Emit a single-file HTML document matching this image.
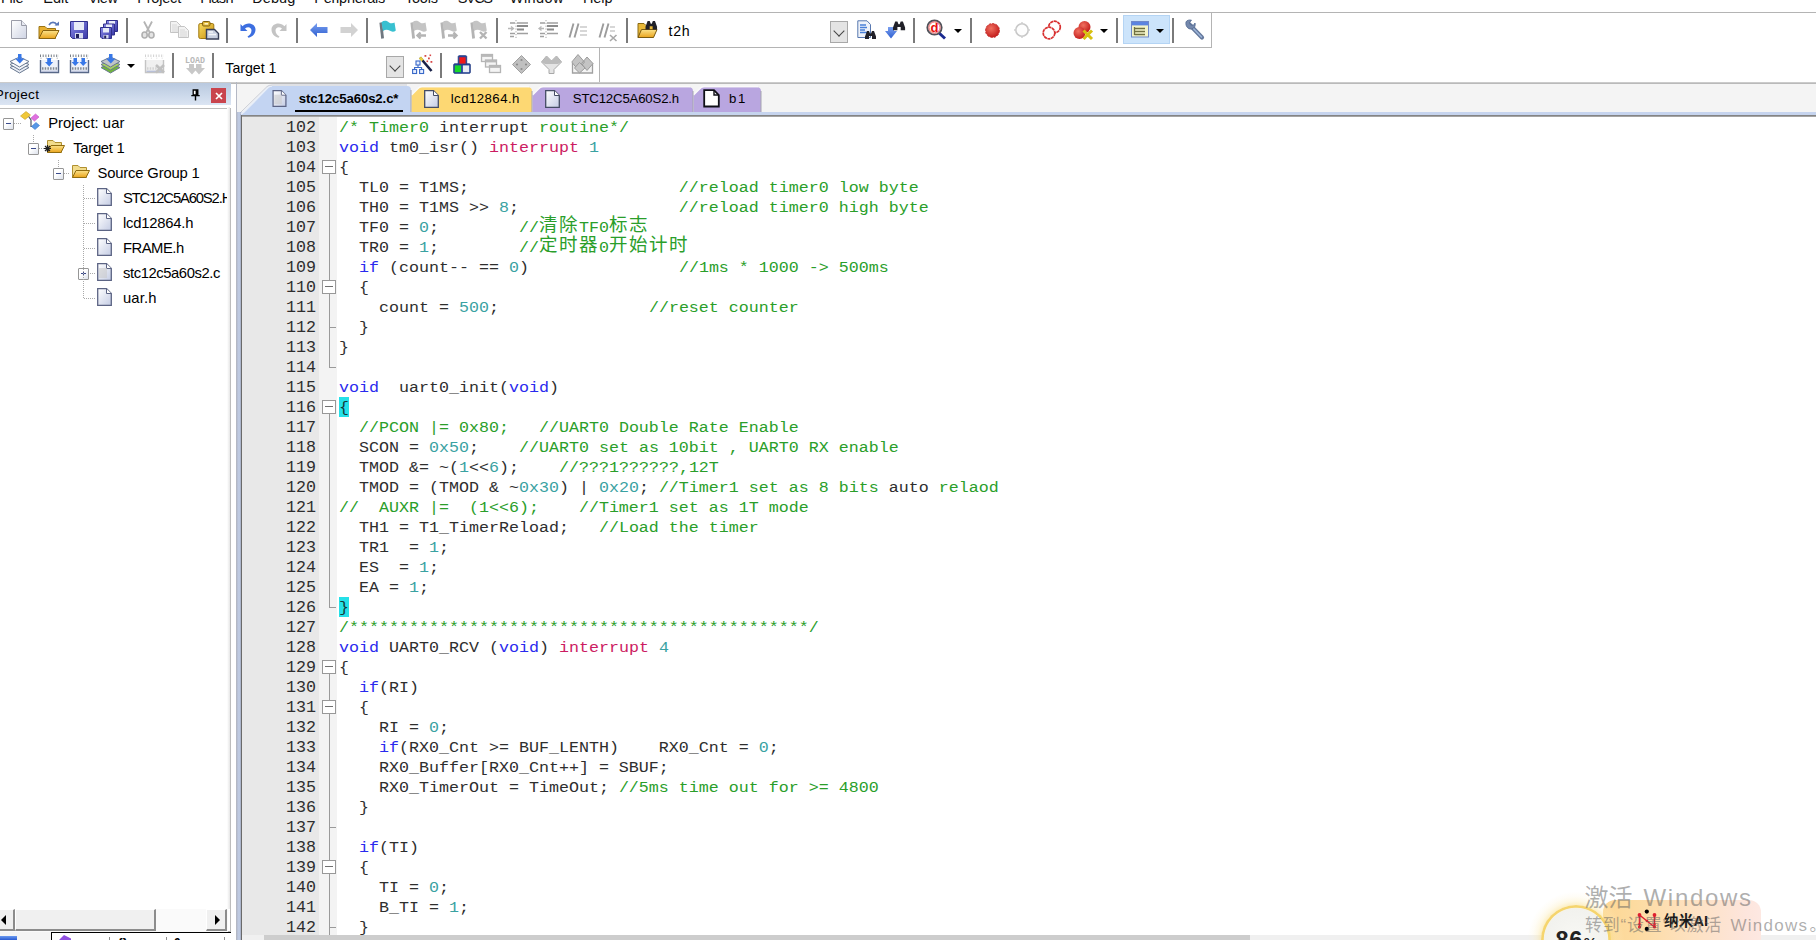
<!DOCTYPE html>
<html lang="zh"><head><meta charset="utf-8"><title>uar - uVision</title>
<style>
*{box-sizing:border-box;margin:0;padding:0}
html,body{width:1816px;height:940px;overflow:hidden;background:#fff}
body{position:relative;font-family:"Liberation Sans","Noto Sans CJK SC",sans-serif;font-size:15px;color:#000}
.abs{position:absolute}
/* menu */
#menu span{position:absolute;top:-11px;line-height:18px;font-size:15px;white-space:nowrap;color:#111}
/* toolbars */
.hline{position:absolute;height:1px;background:#a6a6a6}
.vline{position:absolute;width:1px;background:#a6a6a6}
.sep{position:absolute;width:1.5px;background:#7a7a7a}
.ic{position:absolute;overflow:visible}
.tbt{position:absolute;font-size:14.2px;line-height:18px;white-space:nowrap;color:#000}
.dd{position:absolute;width:0;height:0;border-left:4px solid transparent;border-right:4px solid transparent;border-top:4px solid #000}
.combo{position:absolute;width:18px;height:22px;border:1px solid #a8a8a8;background:#e4e4e4}
.combo:after{content:"";position:absolute;left:4px;top:5px;width:7px;height:7px;border-right:1.5px solid #444;border-bottom:1.5px solid #444;transform:rotate(45deg) scale(1,1)}
/* project panel */
#phead{left:0;top:83px;width:231px;height:22px;background:linear-gradient(#b9c9df,#dbe5f3)}
#ptree{left:-1px;top:108px;width:232px;height:824px;border:1px solid #bcbcbc;background:#fff}
.tr{position:absolute;font-size:15px;line-height:20px;white-space:nowrap;color:#000}
.ex{position:absolute;width:11px;height:12px;border:1px solid #969696;background:linear-gradient(135deg,#fff 40%,#dde2ec);border-radius:1px;margin-top:0.5px}
.ex:before{content:"";position:absolute;left:2px;top:4px;width:5px;height:1.5px;background:#3a4a8c}
.ex.plus:after{content:"";position:absolute;left:4px;top:2px;width:1.5px;height:5.5px;background:#3a4a8c}
.dot{position:absolute;background-image:linear-gradient(#aaa 50%,transparent 50%);background-size:1px 2px;width:1px}
.doth{position:absolute;background-image:linear-gradient(90deg,#aaa 50%,transparent 50%);background-size:2px 1px;height:1px}
/* editor */
#lnbg{left:242px;top:117px;width:77px;height:818px;background:#e8e8e8}
#fmbg{left:319px;top:117px;width:18px;height:818px;background:#f3f3f3}
.ln,.cl{position:absolute;font-family:"Liberation Mono","Noto Sans CJK SC",monospace;font-size:16.667px;line-height:20px;height:20px;white-space:pre;color:#2e2e2e}
.cl{transform:scaleY(0.87);transform-origin:0 14.4px}
.ln{transform:scaleY(0.95);transform-origin:0 14.4px}
.ln{left:256px;width:60px;text-align:right}
.hl{position:absolute;left:338.5px;width:10px;height:20px;background:#25e0e8}
.bb{color:#143838}
.cl{left:339px}
.k{color:#2a2aee}.n{color:#3aa2a2}.c{color:#2a9e2a}.i{color:#cc1c62}
.b{background:#25e0e8;display:inline-block;height:20px;color:#143838;margin-left:-0.5px}
.cj{transform:scaleY(1.15);transform-origin:0 15px;font-size:18.5px;letter-spacing:1.5px;line-height:20px;vertical-align:top;display:inline-block;height:20px;margin-top:-1px}
.fb{position:absolute;left:322px;width:14px;height:14px;border:1.4px solid #989898;background:#fff}
.fb:before{content:"";position:absolute;left:1.5px;top:4.8px;width:8px;height:1.2px;background:#707070}
.fv{position:absolute;left:328.6px;width:1.4px;background:#9a9a9a}
.ft{position:absolute;left:329px;width:7px;height:1.3px;background:#9a9a9a}
/* tabs */
.tab{position:absolute;top:86px;height:28px}
.tabt{position:absolute;font-size:14.2px;line-height:18px;white-space:nowrap;color:#000}
</style></head>
<body>
<!-- MENU -->
<div id="menu"><span style="left:1.0px;font-size:14.5px;letter-spacing:-0.244px">File</span><span style="left:43.2px;font-size:14.5px;letter-spacing:0.05px">Edit</span><span style="left:88.2px;font-size:14.5px;letter-spacing:-0.493px">View</span><span style="left:137.2px;font-size:14.5px;letter-spacing:-0.192px">Project</span><span style="left:200.2px;font-size:14.5px;letter-spacing:-0.534px">Flash</span><span style="left:252.2px;font-size:14.5px;letter-spacing:0.093px">Debug</span><span style="left:314.2px;font-size:14.5px;letter-spacing:-0.231px">Peripherals</span><span style="left:404.9px;font-size:14.5px;letter-spacing:-0.192px">Tools</span><span style="left:457.8px;font-size:14.5px;letter-spacing:-1.475px">SVCS</span><span style="left:509.8px;font-size:14.5px;letter-spacing:0.404px">Window</span><span style="left:582.9px;font-size:14.5px;letter-spacing:-0.082px">Help</span></div>
<!-- TOOLBARS -->
<svg width="0" height="0" style="position:absolute"><defs>
<linearGradient id="gPage" x1="0" y1="0" x2="1" y2="1"><stop offset="0" stop-color="#ffffff"/><stop offset="1" stop-color="#cfd4e4"/></linearGradient>
<linearGradient id="gFold" x1="0" y1="0" x2="0" y2="1"><stop offset="0" stop-color="#fbe28a"/><stop offset="1" stop-color="#eaa41c"/></linearGradient>
<linearGradient id="gFlop" x1="0" y1="0" x2="1" y2="1"><stop offset="0" stop-color="#8a8ae8"/><stop offset="1" stop-color="#3a3aa8"/></linearGradient>
<linearGradient id="gBlue" x1="0" y1="0" x2="0" y2="1"><stop offset="0" stop-color="#7aa0f0"/><stop offset="1" stop-color="#2f5fd0"/></linearGradient>
<linearGradient id="gGold" x1="0" y1="0" x2="1" y2="1"><stop offset="0" stop-color="#f8dc60"/><stop offset="1" stop-color="#c89010"/></linearGradient>
<radialGradient id="gRed" cx="0.4" cy="0.35" r="0.7"><stop offset="0" stop-color="#f07060"/><stop offset="1" stop-color="#c01818"/></radialGradient>
<linearGradient id="gGray" x1="0" y1="0" x2="0" y2="1"><stop offset="0" stop-color="#e0e0e0"/><stop offset="1" stop-color="#b4b4b4"/></linearGradient>
<linearGradient id="gTree" x1="0" y1="0" x2="1" y2="1"><stop offset="0" stop-color="#ffffff"/><stop offset="1" stop-color="#c4cce4"/></linearGradient>
</defs></svg><div class="hline" style="left:0;top:12px;width:1816px;background:#b4b4b4"></div><div class="hline" style="left:0;top:47px;width:1212px;background:#b4b4b4"></div><div class="vline" style="left:1211px;top:12px;height:36px;background:#b4b4b4"></div><div class="vline" style="left:599px;top:47px;height:36px;background:#b4b4b4"></div><div class="hline" style="left:0;top:82px;width:1816px;height:2px;background:linear-gradient(#d4d4d4,#b0b0b0)"></div><div class="sep" style="left:126px;top:18px;height:25px"></div><div class="sep" style="left:226px;top:18px;height:25px"></div><div class="sep" style="left:296px;top:18px;height:25px"></div><div class="sep" style="left:366px;top:18px;height:25px"></div><div class="sep" style="left:496px;top:18px;height:25px"></div><div class="sep" style="left:626px;top:18px;height:25px"></div><div class="sep" style="left:913px;top:18px;height:25px"></div><div class="sep" style="left:970px;top:18px;height:25px"></div><div class="sep" style="left:1116px;top:18px;height:25px"></div><div class="sep" style="left:1172px;top:18px;height:25px"></div><svg class="ic" style="left:11px;top:20px" width="16" height="19" viewBox="0 0 16 19" ><path d="M0.5 0.5H10.5L15.5 5.5V18.5H0.5Z" fill="url(#gPage)" stroke="#9a9ca8"/><path d="M10.5 0.5V5.5H15.5" fill="#e8eaf2" stroke="#9a9ca8"/></svg><svg class="ic" style="left:38px;top:20px" width="22" height="20" viewBox="0 0 22 20" ><path d="M1 6.5H7L9 8.5H17.5V18.5H1Z" fill="#e8b030" stroke="#9a7414"/>
<path d="M1 18.5L5 10.5H21L17 18.5Z" fill="url(#gFold)" stroke="#8a6410"/>
<path d="M11 5C13 1.5 17 1.5 19 5" fill="none" stroke="#5a78b8" stroke-width="1.6"/><path d="M16.5 5.5H21V1.5Z" fill="#5a78b8"/></svg><svg class="ic" style="left:70px;top:21px" width="18" height="18" viewBox="0 0 18 18" ><path d="M0.5 0.5H17.5V17.5H2.5L0.5 15.5Z" fill="url(#gFlop)" stroke="#30308a"/>
<rect x="4" y="1" width="10" height="8" fill="#e8ecf8"/><rect x="5" y="12" width="8" height="5.5" fill="#d8dcf0"/><rect x="6" y="13" width="3" height="4" fill="#20205a"/></svg><svg class="ic" style="left:100px;top:20px" width="18" height="19" viewBox="0 0 18 19" ><g transform="translate(6,0)"><path d="M0.5 0.5H11.5V11.5H2L0.5 10Z" fill="url(#gFlop)" stroke="#30308a"/><rect x="3" y="1" width="6" height="4.5" fill="#e8ecf8"/><rect x="3.5" y="8" width="5" height="3.5" fill="#d8dcf0"/><rect x="4.2" y="8.6" width="2" height="2.9" fill="#20205a"/></g><g transform="translate(3,3.5)"><path d="M0.5 0.5H11.5V11.5H2L0.5 10Z" fill="url(#gFlop)" stroke="#30308a"/><rect x="3" y="1" width="6" height="4.5" fill="#e8ecf8"/><rect x="3.5" y="8" width="5" height="3.5" fill="#d8dcf0"/><rect x="4.2" y="8.6" width="2" height="2.9" fill="#20205a"/></g><g transform="translate(0,7)"><path d="M0.5 0.5H11.5V11.5H2L0.5 10Z" fill="url(#gFlop)" stroke="#30308a"/><rect x="3" y="1" width="6" height="4.5" fill="#e8ecf8"/><rect x="3.5" y="8" width="5" height="3.5" fill="#d8dcf0"/><rect x="4.2" y="8.6" width="2" height="2.9" fill="#20205a"/></g></svg><svg class="ic" style="left:141px;top:21px" width="14" height="18" viewBox="0 0 14 18" ><path d="M3 0.5L8.5 11M11 0.5L5.5 11" stroke="#b4b4b4" stroke-width="1.8" fill="none"/>
<ellipse cx="3.6" cy="14" rx="2.6" ry="3" fill="#e4e4e4" stroke="#b0b0b0" stroke-width="1.6"/><ellipse cx="10.4" cy="14" rx="2.6" ry="3" fill="#e4e4e4" stroke="#b0b0b0" stroke-width="1.6"/></svg><svg class="ic" style="left:170px;top:21px" width="19" height="17" viewBox="0 0 19 17" ><g><path d="M0.5 0.5H6.5L10.5 4.5V11.5H0.5Z" fill="#f2f2f2" stroke="#c4c4c4"/><path d="M2 4H7M2 6H9M2 8H9M2 10H9" stroke="#d4d4d4" stroke-width="0.9"/></g><g transform="translate(8,5)"><path d="M0.5 0.5H6.5L10.5 4.5V11.5H0.5Z" fill="#f2f2f2" stroke="#c4c4c4"/><path d="M2 4H7M2 6H9M2 8H9M2 10H9" stroke="#d4d4d4" stroke-width="0.9"/></g></svg><svg class="ic" style="left:198px;top:21px" width="22" height="19" viewBox="0 0 22 19" ><rect x="0.8" y="2.5" width="15" height="15" rx="1.5" fill="url(#gGold)" stroke="#a07810"/>
<rect x="4.5" y="0.5" width="7.5" height="4.5" rx="1.2" fill="#e0b838" stroke="#806010"/><rect x="6.5" y="2" width="3.5" height="1.6" fill="#fff4c0"/>
<path d="M8.5 8.5H16.5L20.5 12.5V18H8.5Z" fill="#c8d0e0" stroke="#384058" stroke-width="1.4"/><path d="M10.5 11H15M10.5 13.5H18" stroke="#f4f6fa" stroke-width="1.4"/></svg><svg class="ic" style="left:240px;top:21px" width="17" height="17" viewBox="0 0 17 17" ><g><path d="M0.5 3V10H7.5L5 7.6C8 5 11.5 6.5 11.5 9.5C11.5 12.5 9.5 14.5 7.5 15.5L8.5 16.8C13 15.5 15.5 12.5 15.5 8.5C15.5 2.5 7 0.5 2.6 5.2Z" fill="#3c6ee0"/></g></svg><svg class="ic" style="left:270px;top:21px" width="17" height="17" viewBox="0 0 17 17" ><g transform="translate(17,0) scale(-1,1)"><path d="M0.5 3V10H7.5L5 7.6C8 5 11.5 6.5 11.5 9.5C11.5 12.5 9.5 14.5 7.5 15.5L8.5 16.8C13 15.5 15.5 12.5 15.5 8.5C15.5 2.5 7 0.5 2.6 5.2Z" fill="#c4c4c4"/></g></svg><svg class="ic" style="left:309.5px;top:21.5px" width="18" height="16" viewBox="0 0 18 16" ><g><path d="M0 8L7 1V5H17.5V11H7V15Z" fill="url(#gBlue)"/></g></svg><svg class="ic" style="left:339.5px;top:21.5px" width="18" height="16" viewBox="0 0 18 16" ><g transform="translate(18,0) scale(-1,1)"><path d="M0 8L7 1V5H17.5V11H7V15Z" fill="#d2d2d2"/></g></svg><svg class="ic" style="left:378px;top:20px" width="20" height="19" viewBox="0 0 20 19" ><path d="M2.8 2.5L4.6 18.5" stroke="#707880" stroke-width="2.8"/><path d="M3.5 2.2C6 0.2 9 0.6 11 2.4C13 3.8 15 3.4 16.5 2.6L17.8 10.5C16 12.2 13.5 12 11.5 10.6C9.5 9.2 7 9.6 5 11Z" fill="#38c0d0"/></svg><svg class="ic" style="left:409px;top:20px" width="20" height="19" viewBox="0 0 20 19" ><path d="M2.8 2.5L4.6 18.5" stroke="#b4b4b4" stroke-width="2.8"/><path d="M3.5 2.2C6 0.2 9 0.6 11 2.4C13 3.8 15 3.4 16.5 2.6L17.8 10.5C16 12.2 13.5 12 11.5 10.6C9.5 9.2 7 9.6 5 11Z" fill="#c4c4c4"/><path d="M9 15.5H17M11.5 12.5L8.5 15.5L11.5 18.5" stroke="#b4b4b4" stroke-width="2.4" fill="none"/></svg><svg class="ic" style="left:439px;top:20px" width="20" height="19" viewBox="0 0 20 19" ><path d="M2.8 2.5L4.6 18.5" stroke="#b4b4b4" stroke-width="2.8"/><path d="M3.5 2.2C6 0.2 9 0.6 11 2.4C13 3.8 15 3.4 16.5 2.6L17.8 10.5C16 12.2 13.5 12 11.5 10.6C9.5 9.2 7 9.6 5 11Z" fill="#c4c4c4"/><path d="M9 15.5H17M14.5 12.5L17.5 15.5L14.5 18.5" stroke="#b4b4b4" stroke-width="2.4" fill="none"/></svg><svg class="ic" style="left:469px;top:20px" width="20" height="19" viewBox="0 0 20 19" ><path d="M2.8 2.5L4.6 18.5" stroke="#b4b4b4" stroke-width="2.8"/><path d="M3.5 2.2C6 0.2 9 0.6 11 2.4C13 3.8 15 3.4 16.5 2.6L17.8 10.5C16 12.2 13.5 12 11.5 10.6C9.5 9.2 7 9.6 5 11Z" fill="#c4c4c4"/><path d="M11 12L17.5 18.5M17.5 12L11 18.5" stroke="#b4b4b4" stroke-width="2.4"/></svg><svg class="ic" style="left:508px;top:20px" width="21" height="19" viewBox="0 0 21 19" ><path d="M0 8.5H5M3 6.5L5.5 8.5L3 10.5" stroke="#b8b8b8" stroke-width="1.3" fill="none"/><path d="M2 3H20M2 13.5H20M2 16.5H6" stroke="#a0a0a0" stroke-width="1.5" stroke-dasharray="5 2 20"/><path d="M9 6H20M9 9.5H16" stroke="#8c8c8c" stroke-width="2"/><path d="M8 0V19" stroke="#a8a8a8" stroke-width="1" stroke-dasharray="1.2 1.6"/></svg><svg class="ic" style="left:538px;top:20px" width="21" height="19" viewBox="0 0 21 19" ><path d="M1 8.5H6M3.5 6.5L1 8.5L3.5 10.5" stroke="#b8b8b8" stroke-width="1.3" fill="none"/><path d="M2 3H20M2 13.5H20M2 16.5H6" stroke="#a0a0a0" stroke-width="1.5" stroke-dasharray="5 2 20"/><path d="M9 6H20M9 9.5H16" stroke="#8c8c8c" stroke-width="2"/><path d="M8 0V19" stroke="#a8a8a8" stroke-width="1" stroke-dasharray="1.2 1.6"/></svg><svg class="ic" style="left:569px;top:23px" width="19" height="19" viewBox="0 0 19 19" ><path d="M4.5 0.5L0.5 14.5M9.5 0.5L5.5 14.5" stroke="#9c9c9c" stroke-width="1.9"/><path d="M11 4H18M11 8H18M11 12H18" stroke="#b0b0b0" stroke-width="1.2"/></svg><svg class="ic" style="left:599px;top:23px" width="19" height="19" viewBox="0 0 19 19" ><path d="M4.5 0.5L0.5 14.5M9.5 0.5L5.5 14.5" stroke="#9c9c9c" stroke-width="1.9"/><path d="M11 4H16M11 8H16" stroke="#b0b0b0" stroke-width="1.2"/><path d="M11 12L17.5 18M17.5 12L11 18" stroke="#a8a8a8" stroke-width="1.6"/></svg><svg class="ic" style="left:637px;top:20px" width="22" height="19" viewBox="0 0 22 19" ><path d="M1 3.5H7L9 5.5H16V17.5H1Z" fill="#e8b838" stroke="#8a6a14"/><path d="M1 17.5L4.5 9.5H20L16.5 17.5Z" fill="url(#gFold)" stroke="#7a5a10"/><g transform="translate(8.5,0.5) scale(1.05)"><path d="M0 6L2 0.5H4L5 3H6L7 0.5H9L11 6V8.5H7V5.5H4V8.5H0Z" fill="#202028"/></g></svg><div class="tbt" style="left:668.5px;top:22px;letter-spacing:0.755px">t2h</div><div class="combo" style="left:830px;top:21px"></div><svg class="ic" style="left:857px;top:20px" width="20" height="20" viewBox="0 0 20 20" ><path d="M0.8 0.8H10L13.5 4.5V17.5H0.8Z" fill="#eef2fa" stroke="#5878b0"/><path d="M3 5H9M3 7.5H10M3 10H8M3 12.5H10" stroke="#4a80d8" stroke-width="1.3"/><g transform="translate(8,10.5) scale(1.0)"><path d="M0 6L2 0.5H4L5 3H6L7 0.5H9L11 6V8.5H7V5.5H4V8.5H0Z" fill="#202028"/></g></svg><svg class="ic" style="left:885px;top:20px" width="21" height="20" viewBox="0 0 21 20" ><path d="M3 7H9V11H12L6 18.5L0 11H3Z" fill="url(#gBlue)"/><g transform="translate(8,1) scale(1.1)"><path d="M0 6L2 0.5H4L5 3H6L7 0.5H9L11 6V8.5H7V5.5H4V8.5H0Z" fill="#202028"/></g></svg><svg class="ic" style="left:926px;top:19px" width="21" height="21" viewBox="0 0 21 21" ><path d="M12 13L19 19.5" stroke="#1a2a90" stroke-width="3"/><circle cx="8.5" cy="8.5" r="7.2" fill="#fff" stroke="#505058" stroke-width="1.8"/><circle cx="8.5" cy="8.5" r="5.6" fill="#fff" stroke="#e83030" stroke-width="0.8"/><text x="4.4" y="13" font-family="Liberation Sans,sans-serif" font-weight="bold" font-size="13" fill="#e81010">d</text></svg><div class="dd" style="left:954px;top:29px"></div><svg class="ic" style="left:984px;top:22px" width="17" height="17" viewBox="0 0 17 17" ><circle cx="8.5" cy="8.5" r="7" fill="url(#gRed)" stroke="#c83030" stroke-width="1" stroke-dasharray="2.2 1.4"/></svg><svg class="ic" style="left:1014px;top:22px" width="16" height="16" viewBox="0 0 16 16" ><circle cx="8" cy="8" r="6.2" fill="#fdfdfd" stroke="#c8c8c8" stroke-width="1.6"/><path d="M8 0V2M8 14V16M0 8H2M14 8H16" stroke="#d0d0d0" stroke-width="1.5"/></svg><svg class="ic" style="left:1042px;top:20px" width="20" height="20" viewBox="0 0 20 20" ><circle cx="12.5" cy="7" r="5.8" fill="#fff" stroke="#d83030" stroke-width="1.7" stroke-dasharray="3.2 0.5"/><circle cx="7" cy="13" r="5.8" fill="#fff" stroke="#d83030" stroke-width="1.7" stroke-dasharray="3.2 0.5"/></svg><svg class="ic" style="left:1073px;top:20px" width="22" height="20" viewBox="0 0 22 20" ><circle cx="11.5" cy="7" r="6" fill="url(#gRed)"/><circle cx="6.5" cy="13" r="6" fill="url(#gRed)"/><path d="M10.5 10.5L19 19M19 10.5L10.5 19" stroke="#d8c010" stroke-width="3"/></svg><div class="dd" style="left:1100px;top:29px"></div><div class="abs" style="left:1123px;top:15px;width:47px;height:29px;background:#cce4fb;border:1px solid #b4d4f4"></div><svg class="ic" style="left:1131px;top:21px" width="18" height="17" viewBox="0 0 18 17" ><rect x="0.5" y="0.5" width="17" height="15.5" fill="#f4f4c8" stroke="#7088c8"/><rect x="1" y="1" width="16" height="3.4" fill="#5c84e0"/><path d="M3.5 6V14M3.5 7.5H14M3.5 10.5H14M3.5 13.5H14" stroke="#707040" stroke-width="1.3" fill="none"/></svg><div class="dd" style="left:1156px;top:29px"></div><svg class="ic" style="left:1184px;top:19px" width="22" height="21" viewBox="0 0 22 21" ><path d="M5 5L18 18.5" stroke="#64789c" stroke-width="4.2" stroke-linecap="round"/><path d="M5.5 5.5L17.5 18" stroke="#9cb4d8" stroke-width="1.6" stroke-linecap="round"/><path d="M2 3C2.5 1.5 5 0.5 7.5 1.2L5.5 3.6L6.5 6L9.5 6.2L11 4C11.8 6.5 10.5 9.5 7.5 10C4 10.5 1.2 7 2 3Z" fill="#7488ac" stroke="#506890" stroke-width="0.8"/></svg><div class="sep" style="left:172px;top:53px;height:25px"></div><div class="sep" style="left:212px;top:53px;height:25px"></div><div class="sep" style="left:440px;top:53px;height:25px"></div><svg class="ic" style="left:9px;top:54px" width="21" height="20" viewBox="0 0 21 20" ><path d="M1 13.5L10.5 9L20 13.5L10.5 19Z" fill="#e8ecf4" stroke="#687890" stroke-width="1"/>
<path d="M1 10.5L10.5 6L20 10.5L10.5 16Z" fill="#f4f6fa" stroke="#687890" stroke-width="1"/>
<path d="M1 7.5L10.5 3L20 7.5L10.5 13Z" fill="#fcfcfe" stroke="#687890" stroke-width="1"/>
<path d="M9 0H12.5V4.5H15.5L10.8 9.5L6 4.5H9Z" fill="#3878e8"/></svg><svg class="ic" style="left:39px;top:54px" width="21" height="20" viewBox="0 0 21 20" ><path d="M1 1.8H20" stroke="#586068" stroke-width="2.6" stroke-dasharray="1 1.7" opacity="0.8"/><path d="M1.5 4.2H20" stroke="#586068" stroke-width="1" stroke-dasharray="1 4.4" opacity="0.6"/><path d="M1.5 6V18.5H19.5V6" fill="#eef2fa" stroke="#586888" stroke-width="1.4"/><path d="M3 14.5H18" stroke="#586068" stroke-width="2.4" stroke-dasharray="1.5 1.2" opacity="0.7"/><path d="M2.5 17.3H18.5" stroke="#b8c0d8" stroke-width="1.4"/><path d="M8.2 4H12V8H14.2L10.2 12.5L6 8H8.2Z" fill="#3878e8"/></svg><svg class="ic" style="left:69px;top:54px" width="21" height="20" viewBox="0 0 21 20" ><path d="M1 1.8H20" stroke="#586068" stroke-width="2.6" stroke-dasharray="1 1.7" opacity="0.8"/><path d="M1.5 4.2H20" stroke="#586068" stroke-width="1" stroke-dasharray="1 4.4" opacity="0.6"/><path d="M1.5 6V18.5H19.5V6" fill="#eef2fa" stroke="#586888" stroke-width="1.4"/><path d="M3 14.5H18" stroke="#586068" stroke-width="2.4" stroke-dasharray="1.5 1.2" opacity="0.7"/><path d="M2.5 17.3H18.5" stroke="#b8c0d8" stroke-width="1.4"/><path d="M4.5 4H8V8H10L6.2 12L2.5 8H4.5Z M12.5 4H16V8H18L14.2 12L10.5 8H12.5Z" fill="#3878e8"/></svg><svg class="ic" style="left:100px;top:54px" width="21" height="20" viewBox="0 0 21 20" ><path d="M1 13.5L10.5 9L20 13.5L10.5 19Z" fill="#70b838" stroke="#687890" stroke-width="1"/>
<path d="M1 10.5L10.5 6L20 10.5L10.5 16Z" fill="#a8d060" stroke="#687890" stroke-width="1"/>
<path d="M1 7.5L10.5 3L20 7.5L10.5 13Z" fill="#c0c4c8" stroke="#687890" stroke-width="1"/>
<path d="M9 0H12.5V4.5H15.5L10.8 9.5L6 4.5H9Z" fill="#3878e8"/></svg><div class="dd" style="left:127px;top:64px"></div><svg class="ic" style="left:144px;top:54px" width="21" height="20" viewBox="0 0 21 20" ><path d="M1 1.8H20" stroke="#c8c8c8" stroke-width="2.6" stroke-dasharray="1 1.7" opacity="0.8"/><path d="M1.5 4.2H20" stroke="#c8c8c8" stroke-width="1" stroke-dasharray="1 4.4" opacity="0.6"/><path d="M1.5 6V18.5H19.5V6" fill="#f0f0f0" stroke="#c4c4c4" stroke-width="1.4"/><path d="M3 14.5H18" stroke="#c8c8c8" stroke-width="2.4" stroke-dasharray="1.5 1.2" opacity="0.7"/><path d="M2.5 17.3H18.5" stroke="#b8c0d8" stroke-width="1.4"/><path d="M12 11L20 18.5M20 11L12 18.5" stroke="#c0c0c0" stroke-width="2.6"/></svg><svg class="ic" style="left:185px;top:54px" width="21" height="21" viewBox="0 0 21 21" ><text x="0" y="8.5" font-family="Liberation Mono,monospace" font-weight="bold" font-size="9.5" fill="#b8b8b8" textLength="20" lengthAdjust="spacingAndGlyphs">LOAD</text><path d="M4 10H9V14H11V10H16.5V14H20L14 20.5L10.5 16.5L7 20.5L1 14H4Z" fill="#c8c8c8"/></svg><div class="tbt" style="left:225.3px;top:58.5px;letter-spacing:-0.008px">Target 1</div><div class="combo" style="left:386px;top:56px"></div><svg class="ic" style="left:412px;top:54px" width="22" height="21" viewBox="0 0 22 21" ><path d="M8 3.5L19.5 17" stroke="#182048" stroke-width="2.6"/><path d="M8 3.5L10.5 6.5" stroke="#e8d040" stroke-width="2.8"/>
<g fill="#d84848"><rect x="12.5" y="1" width="1.8" height="1.8"/><rect x="16" y="3.5" width="1.8" height="1.8"/><rect x="18.5" y="7" width="1.8" height="1.8"/><rect x="14.5" y="6.5" width="1.6" height="1.6"/><rect x="17.5" y="0.5" width="1.6" height="1.6"/></g>
<g fill="#e8f0ff" stroke="#3868c8" stroke-width="1.1"><rect x="4" y="7" width="4" height="4"/><rect x="0.6" y="15.5" width="4" height="4"/><rect x="7.6" y="15.5" width="4" height="4"/></g><path d="M6 11V13.5M2.6 15.5V13.5H9.6V15.5" stroke="#3868c8" stroke-width="1.1" fill="none"/></svg><svg class="ic" style="left:453px;top:55px" width="18" height="19" viewBox="0 0 18 19" ><g transform="scale(0.9,0.905)"><rect x="0.8" y="9.8" width="18.4" height="10.4" rx="1" fill="#2848a0" stroke="#203880"/><rect x="5.8" y="0.8" width="9.4" height="10" rx="1" fill="#2848a0" stroke="#203880"/>
<rect x="7" y="2.5" width="7" height="7" fill="#f01818"/><rect x="2" y="11.5" width="7" height="7.5" fill="#18d828"/><rect x="11" y="11.5" width="7" height="7.5" fill="#e8ecf4"/></g></svg><svg class="ic" style="left:481px;top:54px" width="21" height="20" viewBox="0 0 21 20" ><g><rect x="0.5" y="0.5" width="11" height="7" fill="#f4f4f4" stroke="#b4b4b4" stroke-width="1.3"/><rect x="0.5" y="0.5" width="11" height="2.4" fill="#b8b8b8"/></g><g transform="translate(4,5.5)"><rect x="0.5" y="0.5" width="11" height="7" fill="#f4f4f4" stroke="#b4b4b4" stroke-width="1.3"/><rect x="0.5" y="0.5" width="11" height="2.4" fill="#b8b8b8"/></g><g transform="translate(8,11)"><rect x="0.5" y="0.5" width="11" height="7" fill="#f4f4f4" stroke="#b4b4b4" stroke-width="1.3"/><rect x="0.5" y="0.5" width="11" height="2.4" fill="#b8b8b8"/></g></svg><svg class="ic" style="left:512px;top:55px" width="19" height="19" viewBox="0 0 19 19" ><path d="M9.5 0.5L18.5 9.5L9.5 18.5L0.5 9.5Z" fill="#c0c0c0" stroke="#a0a0a0"/><g fill="#8c8c8c"><circle cx="9.5" cy="5" r="1.1"/><circle cx="5" cy="9.5" r="1.1"/><circle cx="14" cy="9.5" r="1.1"/><circle cx="9.5" cy="14" r="1.1"/></g></svg><svg class="ic" style="left:541px;top:55px" width="21" height="19" viewBox="0 0 21 19" ><path d="M0.5 7L5.5 1L10.5 6L15.5 1L20.5 7L13 14.5V18.5H8V14.5Z" fill="#e4e4e4" stroke="#a8a8a8"/><path d="M0.5 7L5.5 1L10.5 6L15.5 1L20.5 7L17 9H4Z" fill="#bcbcbc"/></svg><svg class="ic" style="left:571px;top:54px" width="23" height="20" viewBox="0 0 23 20" ><path d="M1.5 9V19H21.5V9" fill="#f4f4f4" stroke="#a0a0a0" stroke-width="1.3"/><path d="M7 0.5L13.5 8L7 16L0.8 8Z M16 3L22 9.5L16 16.5L10.5 9.5Z" fill="#c4c4c4" stroke="#9c9c9c"/><path d="M8.5 8.5L14 14L8.5 19L3.5 14Z" fill="#c8c8c8" stroke="#9c9c9c"/><path d="M1.5 14L5.5 19M21.5 14L17 19" stroke="#fff" stroke-width="0"/></svg>
<!-- PROJECT PANEL -->
<div class="abs" id="phead"></div><div class="abs" style="left:-5.2px;top:86.3px;font-size:13.6px;line-height:18px;letter-spacing:0.298px">Project</div><svg class="ic" style="left:191px;top:89px" width="9" height="12" viewBox="0 0 9 12" ><path d="M2.2 1H6.8V6H2.2Z" fill="#fff" stroke="#000" stroke-width="1.3"/><rect x="4.6" y="1" width="2.4" height="5" fill="#000"/><path d="M0.3 6.6H8.7M4.5 6.6V11.5" stroke="#000" stroke-width="1.4" fill="none"/></svg><div class="abs" style="left:211px;top:88px;width:15px;height:15px;background:#c9444d"></div><svg class="ic" style="left:214.5px;top:91.5px" width="8" height="8" viewBox="0 0 8 8" ><path d="M1 1L7 7M7 1L1 7" stroke="#fff" stroke-width="1.7"/></svg><div class="abs" id="ptree"></div><div class="abs" style="left:227px;top:107px;width:3px;height:802px;background:linear-gradient(90deg,#fff,#e6e6e6)"></div><div class="tr" style="left:48.2px;top:113px;font-size:14.8px;letter-spacing:0.044px">Project: uar</div><div class="tr" style="left:73.2px;top:138px;font-size:14.8px;letter-spacing:-0.284px">Target 1</div><div class="tr" style="left:97.5px;top:163px;font-size:14.8px;letter-spacing:-0.162px">Source Group 1</div><div class="tr" style="left:123.0px;top:188px;font-size:14.8px;letter-spacing:-1.143px;width:104px;overflow:hidden">STC12C5A60S2.H</div><div class="tr" style="left:123.0px;top:213px;font-size:14.8px;letter-spacing:-0.221px">lcd12864.h</div><div class="tr" style="left:123.0px;top:238px;font-size:14.8px;letter-spacing:-0.492px">FRAME.h</div><div class="tr" style="left:123.0px;top:263px;font-size:14.8px;letter-spacing:-0.423px">stc12c5a60s2.c</div><div class="tr" style="left:123.0px;top:288px;font-size:14.8px;letter-spacing:0.136px">uar.h</div><div class="ex" style="left:2.5px;top:117px"></div><div class="ex" style="left:27.5px;top:142px"></div><div class="ex" style="left:52.5px;top:167px"></div><div class="ex plus" style="left:77.5px;top:267px"></div><div class="doth" style="left:14px;top:123px;width:8px"></div><div class="dot" style="left:33px;top:135px;height:8px"></div><div class="doth" style="left:39px;top:148px;width:6px"></div><div class="dot" style="left:58px;top:160px;height:8px"></div><div class="doth" style="left:64px;top:173px;width:6px"></div><div class="dot" style="left:83px;top:185px;height:113px"></div><div class="doth" style="left:84px;top:198px;width:12px"></div><div class="doth" style="left:84px;top:223px;width:12px"></div><div class="doth" style="left:84px;top:248px;width:12px"></div><div class="doth" style="left:84px;top:298px;width:12px"></div><div class="doth" style="left:90px;top:273px;width:6px"></div><svg class="ic" style="left:20px;top:111px" width="20" height="20" viewBox="0 0 20 20" ><path d="M8 4.5L11 9V15.5H13" stroke="#505868" stroke-width="1.2" fill="none"/><path d="M0.5 5L6 0.5L10.5 4L5 8.5Z" fill="#f0c838" stroke="#c8a020" stroke-width="0.6"/><path d="M11 7L15.5 3L19 6L14.5 10Z" fill="#e070e0" stroke="#c050c0" stroke-width="0.6"/><path d="M11.5 15.5L16 11.5L19.5 14.5L15 18.5Z" fill="#5898e8" stroke="#3878c8" stroke-width="0.6"/></svg><svg class="ic" style="left:44px;top:138px" width="21" height="17" viewBox="0 0 21 17" ><path d="M3.5 2.5H9L11 4.5H17.5V14.5H3.5Z" fill="#f2dc8c" stroke="#b09030"/><path d="M3.5 14.5L7 7.5H20.5L17 14.5Z" fill="url(#gFold)" stroke="#906c10"/><path d="M0 10.5H7M3.5 7V14M1 8L6 13M6 8L1 13" stroke="#202020" stroke-width="1.2"/></svg><svg class="ic" style="left:69px;top:163px" width="21" height="17" viewBox="0 0 21 17" ><path d="M3.5 2.5H9L11 4.5H17.5V14.5H3.5Z" fill="#f2dc8c" stroke="#b09030"/><path d="M3.5 14.5L7 7.5H20.5L17 14.5Z" fill="url(#gFold)" stroke="#906c10"/></svg><svg class="ic" style="left:97px;top:188px" width="15" height="18" viewBox="0 0 15 18" ><path d="M0.7 0.7H9.5L14.3 5.5V17.3H0.7Z" fill="url(#gTree)" stroke="#5c6484" stroke-width="1.3"/><path d="M9.5 0.7V5.5H14.3" fill="#fff" stroke="#5c6484" stroke-width="1"/></svg><svg class="ic" style="left:97px;top:213px" width="15" height="18" viewBox="0 0 15 18" ><path d="M0.7 0.7H9.5L14.3 5.5V17.3H0.7Z" fill="url(#gTree)" stroke="#5c6484" stroke-width="1.3"/><path d="M9.5 0.7V5.5H14.3" fill="#fff" stroke="#5c6484" stroke-width="1"/></svg><svg class="ic" style="left:97px;top:238px" width="15" height="18" viewBox="0 0 15 18" ><path d="M0.7 0.7H9.5L14.3 5.5V17.3H0.7Z" fill="url(#gTree)" stroke="#5c6484" stroke-width="1.3"/><path d="M9.5 0.7V5.5H14.3" fill="#fff" stroke="#5c6484" stroke-width="1"/></svg><svg class="ic" style="left:97px;top:263px" width="15" height="18" viewBox="0 0 15 18" ><path d="M0.7 0.7H9.5L14.3 5.5V17.3H0.7Z" fill="url(#gTree)" stroke="#5c6484" stroke-width="1.3"/><path d="M9.5 0.7V5.5H14.3" fill="#fff" stroke="#5c6484" stroke-width="1"/><rect x="2" y="5" width="8" height="10" fill="#c8c8c8" opacity="0.55"/></svg><svg class="ic" style="left:97px;top:288px" width="15" height="18" viewBox="0 0 15 18" ><path d="M0.7 0.7H9.5L14.3 5.5V17.3H0.7Z" fill="url(#gTree)" stroke="#5c6484" stroke-width="1.3"/><path d="M9.5 0.7V5.5H14.3" fill="#fff" stroke="#5c6484" stroke-width="1"/></svg><div class="abs" style="left:0;top:909px;width:228px;height:23px;background:#fafafa"></div><div class="abs" style="left:-3px;top:909px;width:18px;height:22px;background:#f0f0f0;border-top:1px solid #fff;border-left:1px solid #fff;border-right:2px solid #8c8c8c;border-bottom:2px solid #8c8c8c"></div><div class="abs" style="left:15px;top:909px;width:141px;height:22px;background:#f0f0f0;border-top:1px solid #fff;border-left:1px solid #fff;border-right:2px solid #8c8c8c;border-bottom:2px solid #8c8c8c"></div><div class="abs" style="left:206px;top:909px;width:21px;height:22px;background:#f0f0f0;border-top:1px solid #fff;border-left:1px solid #fff;border-right:2px solid #8c8c8c;border-bottom:2px solid #8c8c8c"></div><div class="abs" style="left:1px;top:915px;width:0;height:0;border-top:5px solid transparent;border-bottom:5px solid transparent;border-right:5px solid #000"></div><div class="abs" style="left:215px;top:915px;width:0;height:0;border-top:5px solid transparent;border-bottom:5px solid transparent;border-left:5px solid #000"></div><div class="abs" style="left:0;top:932px;width:231px;height:8px;background:#f4f4f4"></div><div class="abs" style="left:51px;top:932px;width:180px;height:8px;background:#fff;border-top:1px solid #000;border-left:1px solid #000"></div><div class="abs" style="left:0;top:936px;width:17px;height:4px;background:linear-gradient(#6a9af0,#2a5ad0)"></div><svg class="ic" style="left:58px;top:934px" width="14" height="7" viewBox="0 0 14 7" ><path d="M0 7L6 1L13 4.5V7Z" fill="#9050e0"/></svg><div class="abs" style="left:109px;top:937px;width:1px;height:3px;background:#909090"></div><div class="abs" style="left:166px;top:937px;width:1px;height:3px;background:#909090"></div><div class="abs" style="left:224px;top:937px;width:1px;height:3px;background:#909090"></div><div class="abs" style="left:118px;top:937px;font-size:12px;line-height:12px;font-weight:bold">{}</div><div class="abs" style="left:174px;top:937px;font-size:12px;line-height:12px;font-weight:bold">0</div>
<!-- SPLITTER + EDITOR -->
<div class="abs" style="left:231px;top:84px;width:5px;height:856px;background:#fff"></div><div class="abs" style="left:236px;top:82px;width:1px;height:858px;background:#b4b8c4"></div><div class="abs" style="left:237px;top:84px;width:1579px;height:28px;background:#f4f4f4"></div><div class="abs" style="left:237px;top:112px;width:1579px;height:3px;background:#c6d4ee"></div><div class="abs" style="left:237px;top:112px;width:4px;height:828px;background:linear-gradient(90deg,#b4bcd0,#c0cce4 45%,#bcc8e0 70%,#a0a8bc)"></div><div class="abs" style="left:241px;top:115px;width:1575px;height:2px;background:linear-gradient(#747474,#b4b4b4)"></div><div class="abs" style="left:241px;top:115px;width:1px;height:825px;background:#6a6a6a"></div><svg class="ic" style="left:241px;top:84px" width="580" height="31" viewBox="0 0 580 31" ><path d="M0 31L3 28L27 3.5Q28.5 2 31 2H166Q170 2 170 6V31Z" fill="#c3d4f2"/>
<path d="M0 30L3 28L27 3.5Q28.5 2 31 2" fill="none" stroke="#e8eef8" stroke-width="1.6"/><path d="M-0.5 28.5L26 2.6Q28 1 31 1H166" fill="none" stroke="#b8bcc8" stroke-width="0.7"/>
<path d="M170.5 28V11L177 4.5Q178.5 3.2 181 3.2H287Q291 3.2 291 7V28Z" fill="#fdd873"/>
<path d="M291.5 28V11L298 4.5Q299.5 3.2 302 3.2H448Q452 3.2 452 7V28Z" fill="#b9a6e0"/>
<path d="M452.5 28V11L459 4.5Q460.5 3.2 463 3.2H516Q520 3.2 520 7V28Z" fill="#b9a6e0"/>
<path d="M170.5 11L177 4.5Q178.5 2.6 181 2.6H288M291.5 11L298 4.5Q299.5 2.6 302 2.6H449M452.5 11L459 4.5Q460.5 2.6 463 2.6H517" stroke="#fafafa" stroke-width="1.5" fill="none"/>
<path d="M170 6V28M291 7V28M452 7V28M520 7V28" stroke="#a4a4b0" stroke-width="1"/>
</svg><svg class="ic" style="left:272px;top:90px" width="15" height="17" viewBox="0 0 15 18" ><path d="M0.7 0.7H9.5L14.3 5.5V17.3H0.7Z" fill="url(#gTree)" stroke="#5c6484" stroke-width="1.3"/><path d="M9.5 0.7V5.5H14.3" fill="#fff" stroke="#5c6484" stroke-width="1"/><rect x="2" y="5" width="8" height="10" fill="#c8c8c8" opacity="0.55"/></svg><svg class="ic" style="left:424px;top:90px" width="15" height="18" viewBox="0 0 15 18" ><path d="M0.7 0.7H9.5L14.3 5.5V17.3H0.7Z" fill="url(#gTree)" stroke="#444c64" stroke-width="1.3"/><path d="M9.5 0.7V5.5H14.3" fill="#fff" stroke="#444c64" stroke-width="1"/></svg><svg class="ic" style="left:545px;top:90px" width="15" height="18" viewBox="0 0 15 18" ><path d="M0.7 0.7H9.5L14.3 5.5V17.3H0.7Z" fill="url(#gTree)" stroke="#444c64" stroke-width="1.3"/><path d="M9.5 0.7V5.5H14.3" fill="#fff" stroke="#444c64" stroke-width="1"/></svg><svg class="ic" style="left:703px;top:89px" width="17" height="19" viewBox="0 0 17 19" ><path d="M1.2 1.2H11L15.8 6V17.5H1.2Z" fill="#fff" stroke="#101018" stroke-width="1.8"/><path d="M11 1.2V6H15.8" fill="none" stroke="#101018" stroke-width="1.4"/></svg><div class="tabt" style="left:298.8px;top:90px;font-size:13.2px;letter-spacing:-0.107px;font-weight:bold">stc12c5a60s2.c*</div><div class="tabt" style="left:450.7px;top:90px;font-size:13.2px;letter-spacing:0.467px;">lcd12864.h</div><div class="tabt" style="left:572.8px;top:90px;font-size:13.2px;letter-spacing:-0.164px;">STC12C5A60S2.h</div><div class="tabt" style="left:728.9px;top:90px;font-size:13.2px;letter-spacing:1.764px;">b1</div><div class="abs" style="left:295px;top:109.5px;width:108px;height:2px;background:#000"></div><div class="abs" id="lnbg"></div><div class="abs" id="fmbg"></div><div class="fv" style="top:174px;height:193px"></div><div class="ft" style="top:327px"></div><div class="ft" style="top:367px"></div><div class="fv" style="top:414px;height:193px"></div><div class="ft" style="top:607px"></div><div class="fv" style="top:674px;height:261px"></div><div class="ft" style="top:827px"></div><div class="ft" style="top:927px"></div><div class="hl" style="top:397px"></div><div class="hl" style="top:597px"></div><div class="fb" style="top:160px"></div><div class="fb" style="top:280px"></div><div class="fb" style="top:400px"></div><div class="fb" style="top:660px"></div><div class="fb" style="top:700px"></div><div class="fb" style="top:860px"></div><div class="ln" style="top:117.8px">102</div><div class="cl" style="top:117.8px"><span class="c">/* Timer0 </span>interrupt<span class="c"> routine*/</span></div>
<div class="ln" style="top:137.8px">103</div><div class="cl" style="top:137.8px"><span class="k">void</span> tm0_isr() <span class="i">interrupt</span> <span class="n">1</span></div>
<div class="ln" style="top:157.8px">104</div><div class="cl" style="top:157.8px">{</div>
<div class="ln" style="top:177.8px">105</div><div class="cl" style="top:177.8px">  TL0 = T1MS;                     <span class="c">//reload timer0 low byte</span></div>
<div class="ln" style="top:197.8px">106</div><div class="cl" style="top:197.8px">  TH0 = T1MS &gt;&gt; <span class="n">8</span>;                <span class="c">//reload timer0 high byte</span></div>
<div class="ln" style="top:217.8px">107</div><div class="cl" style="top:217.8px">  TF0 = <span class="n">0</span>;        <span class="c">//<span class="cj">清除</span>TF0<span class="cj">标志</span></span></div>
<div class="ln" style="top:237.8px">108</div><div class="cl" style="top:237.8px">  TR0 = <span class="n">1</span>;        <span class="c">//<span class="cj">定时器</span>0<span class="cj">开始计时</span></span></div>
<div class="ln" style="top:257.8px">109</div><div class="cl" style="top:257.8px">  <span class="k">if</span> (count-- == <span class="n">0</span>)               <span class="c">//1ms * 1000 -&gt; 500ms</span></div>
<div class="ln" style="top:277.8px">110</div><div class="cl" style="top:277.8px">  {</div>
<div class="ln" style="top:297.8px">111</div><div class="cl" style="top:297.8px">    count = <span class="n">500</span>;               <span class="c">//reset counter</span></div>
<div class="ln" style="top:317.8px">112</div><div class="cl" style="top:317.8px">  }</div>
<div class="ln" style="top:337.8px">113</div><div class="cl" style="top:337.8px">}</div>
<div class="ln" style="top:357.8px">114</div><div class="cl" style="top:357.8px"></div>
<div class="ln" style="top:377.8px">115</div><div class="cl" style="top:377.8px"><span class="k">void</span>  uart0_init(<span class="k">void</span>)</div>
<div class="ln" style="top:397.8px">116</div><div class="cl" style="top:397.8px"><span class="bb">{</span></div>
<div class="ln" style="top:417.8px">117</div><div class="cl" style="top:417.8px">  <span class="c">//PCON |= 0x80;   //UART0 Double Rate Enable</span></div>
<div class="ln" style="top:437.8px">118</div><div class="cl" style="top:437.8px">  SCON = <span class="n">0x50</span>;    <span class="c">//UART0 set as 10bit , UART0 RX enable</span></div>
<div class="ln" style="top:457.8px">119</div><div class="cl" style="top:457.8px">  TMOD &amp;= ~(<span class="n">1</span>&lt;&lt;<span class="n">6</span>);    <span class="c">//???1??????,12T</span></div>
<div class="ln" style="top:477.8px">120</div><div class="cl" style="top:477.8px">  TMOD = (TMOD &amp; ~<span class="n">0x30</span>) | <span class="n">0x20</span>; <span class="c">//Timer1 set as 8 bits </span>auto<span class="c"> relaod</span></div>
<div class="ln" style="top:497.8px">121</div><div class="cl" style="top:497.8px"><span class="c">//  AUXR |=  (1&lt;&lt;6);    //Timer1 set as 1T mode</span></div>
<div class="ln" style="top:517.8px">122</div><div class="cl" style="top:517.8px">  TH1 = T1_TimerReload;   <span class="c">//Load the timer</span></div>
<div class="ln" style="top:537.8px">123</div><div class="cl" style="top:537.8px">  TR1  = <span class="n">1</span>;</div>
<div class="ln" style="top:557.8px">124</div><div class="cl" style="top:557.8px">  ES  = <span class="n">1</span>;</div>
<div class="ln" style="top:577.8px">125</div><div class="cl" style="top:577.8px">  EA = <span class="n">1</span>;</div>
<div class="ln" style="top:597.8px">126</div><div class="cl" style="top:597.8px"><span class="bb">}</span></div>
<div class="ln" style="top:617.8px">127</div><div class="cl" style="top:617.8px"><span class="c">/**********************************************/</span></div>
<div class="ln" style="top:637.8px">128</div><div class="cl" style="top:637.8px"><span class="k">void</span> UART0_RCV (<span class="k">void</span>) <span class="i">interrupt</span> <span class="n">4</span></div>
<div class="ln" style="top:657.8px">129</div><div class="cl" style="top:657.8px">{</div>
<div class="ln" style="top:677.8px">130</div><div class="cl" style="top:677.8px">  <span class="k">if</span>(RI)</div>
<div class="ln" style="top:697.8px">131</div><div class="cl" style="top:697.8px">  {</div>
<div class="ln" style="top:717.8px">132</div><div class="cl" style="top:717.8px">    RI = <span class="n">0</span>;</div>
<div class="ln" style="top:737.8px">133</div><div class="cl" style="top:737.8px">    <span class="k">if</span>(RX0_Cnt &gt;= BUF_LENTH)    RX0_Cnt = <span class="n">0</span>;</div>
<div class="ln" style="top:757.8px">134</div><div class="cl" style="top:757.8px">    RX0_Buffer[RX0_Cnt++] = SBUF;</div>
<div class="ln" style="top:777.8px">135</div><div class="cl" style="top:777.8px">    RX0_TimerOut = TimeOut; <span class="c">//5ms time out for &gt;= 4800</span></div>
<div class="ln" style="top:797.8px">136</div><div class="cl" style="top:797.8px">  }</div>
<div class="ln" style="top:817.8px">137</div><div class="cl" style="top:817.8px"></div>
<div class="ln" style="top:837.8px">138</div><div class="cl" style="top:837.8px">  <span class="k">if</span>(TI)</div>
<div class="ln" style="top:857.8px">139</div><div class="cl" style="top:857.8px">  {</div>
<div class="ln" style="top:877.8px">140</div><div class="cl" style="top:877.8px">    TI = <span class="n">0</span>;</div>
<div class="ln" style="top:897.8px">141</div><div class="cl" style="top:897.8px">    B_TI = <span class="n">1</span>;</div>
<div class="ln" style="top:917.8px">142</div><div class="cl" style="top:917.8px">  }</div>
<div class="abs" style="left:242px;top:935px;width:1574px;height:5px;background:#f0f0f0"></div><div class="abs" style="left:264px;top:935px;width:986px;height:5px;background:#cdcdcd"></div>
<!-- OVERLAY -->
<div class="abs" style="left:1603px;top:900px;width:158px;height:60px;border-radius:12px;background:linear-gradient(90deg,#fdd794,#fddba0 20%,#fde1c0 55%,#fde5dc 90%,#fde8e2)"></div><div class="abs" style="left:1526px;top:890px;width:100px;height:100px;border-radius:50%;background:radial-gradient(circle closest-side,rgba(248,214,110,0) 0,rgba(248,214,110,0) 68%,rgba(250,226,150,0.52) 70.5%,rgba(252,234,176,0.32) 78%,rgba(253,240,200,0.16) 87%,rgba(255,246,220,0) 97%)"></div><div class="abs" style="left:1541px;top:905px;width:70px;height:70px;border-radius:50%;background:radial-gradient(circle closest-side,#f8f8f4 0,#f2f2ee 88%,#f6f3e6 91%,#f5d46c 93.5%,#f6d672 100%)"></div><div class="abs" style="left:1555.5px;top:926.5px;font-size:23.5px;line-height:26px;font-weight:bold;color:#222;letter-spacing:0.6px;white-space:nowrap">86<span style="font-size:15px;margin-left:1px">%</span></div><svg class="ic" style="left:1636px;top:909px" width="22" height="22" viewBox="0 0 22 22" ><path d="M3.5 6V18M3.5 6L18.5 18M18.5 6V18" stroke="#e02030" stroke-width="1.5" fill="none"/><g fill="#e02030"><circle cx="3.5" cy="6" r="1.9"/><circle cx="3.5" cy="18" r="1.6"/><circle cx="18.5" cy="6" r="1.9"/><circle cx="18.5" cy="18" r="1.6"/><circle cx="11" cy="12" r="1.3"/><path d="M1.7 14.5H5.3L3.5 17.5Z M16.7 14.5H20.3L18.5 17.5Z"/></g><circle cx="10.8" cy="2.6" r="2.1" fill="#000"/><circle cx="10.8" cy="19.9" r="2.1" fill="#000"/></svg><div class="abs" style="left:1664px;top:910.5px;font-size:14.5px;line-height:20px;font-weight:bold;color:#1a1a1a;font-family:'Liberation Sans','Noto Sans CJK SC',sans-serif;white-space:nowrap;letter-spacing:0.2px">纳米AI</div><div class="abs" style="left:1584.5px;top:882px;font-size:24px;line-height:32px;color:rgba(96,96,96,0.5);white-space:nowrap;font-family:'Liberation Sans','Noto Sans CJK SC',sans-serif">激活 <span style="position:absolute;left:59px;top:0;letter-spacing:1.7px">Windows</span></div><div class="abs" style="left:1585px;top:913.5px;font-size:17px;line-height:24px;letter-spacing:0.75px;color:rgba(96,96,96,0.5);white-space:nowrap;font-family:'Liberation Sans','Noto Sans CJK SC',sans-serif">转到“设置”以激活<span style="position:absolute;left:145.5px;top:0;letter-spacing:1.25px">Windows</span><span style="position:absolute;left:224.5px;top:0">。</span></div>
</body></html>
